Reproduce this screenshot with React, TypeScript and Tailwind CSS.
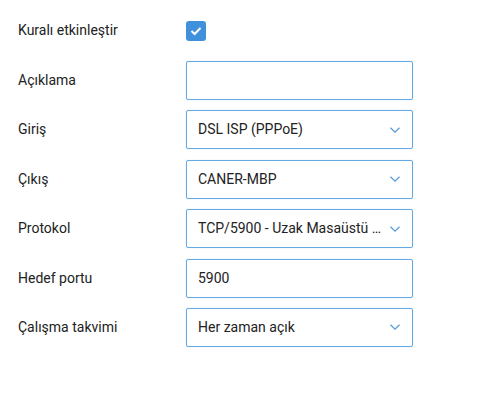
import React from "react"

function Chevron() {
  return (
    <svg width="12" height="8" viewBox="0 0 12 8" fill="none" className="shrink-0">
      <path d="M1.5 1.8 L6 6.2 L10.5 1.8" stroke="#5b9bd8" strokeWidth="1.3" />
    </svg>
  )
}

function Row({ label, children }: { label: string; children: React.ReactNode }) {
  return (
    <div className="flex items-center">
      <div className="w-[168px] text-[14px] text-[#222]">{label}</div>
      {children}
    </div>
  )
}

function Field({ value, select }: { value?: string; select?: boolean }) {
  return (
    <div className="flex h-[39px] w-[227px] items-center rounded-[2px] border-[1.5px] border-[#62a9e6] pl-[11px] pr-[11px] shadow-[0_0_1px_#a9cff2]">
      <span className="flex-1 truncate text-[14px] text-[#222]">{value}</span>
      {select && <Chevron />}
    </div>
  )
}

export default function App() {
  return (
    <div
      className="h-[398px] w-[480px] bg-white pl-[18px] pt-[20px]"
      style={{ fontFamily: "Roboto, 'Noto Sans', sans-serif" }}
    >
      <div className="flex flex-col gap-[10.4px]">
        <div className="mb-[9.6px]">
          <Row label="Kuralı etkinleştir">
            <div className="flex h-[20px] w-[20px] items-center justify-center rounded-[3px] bg-[#3f91dc]">
              <svg width="12" height="10" viewBox="0 0 12 10" fill="none">
                <path d="M1.5 5 L4.6 8 L10.5 2" stroke="white" strokeWidth="2" />
              </svg>
            </div>
          </Row>
        </div>
        <Row label="Açıklama">
          <Field />
        </Row>
        <Row label="Giriş">
          <Field value="DSL ISP (PPPoE)" select />
        </Row>
        <Row label="Çıkış">
          <Field value="CANER-MBP" select />
        </Row>
        <Row label="Protokol">
          <Field value="TCP/5900 - Uzak Masaüstü Bağlantısı" select />
        </Row>
        <Row label="Hedef portu">
          <Field value="5900" />
        </Row>
        <Row label="Çalışma takvimi">
          <Field value="Her zaman açık" select />
        </Row>
      </div>
    </div>
  )
}
